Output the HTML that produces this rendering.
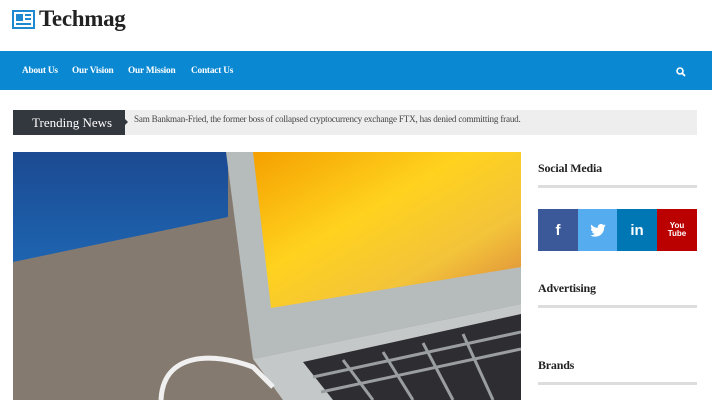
<!DOCTYPE html>
<html><head><style>
*{margin:0;padding:0;box-sizing:border-box}
body{width:712px;height:400px;overflow:hidden;background:#fff;font-family:"Liberation Serif","DejaVu Serif",serif;position:relative}
.a{position:absolute}
.nav a{position:absolute;top:66px;color:#fff;font-weight:bold;font-size:9.3px;letter-spacing:-0.2px}
.h{position:absolute;left:538px;font-weight:bold;font-size:12px;color:#222;letter-spacing:-0.2px}
.ln{position:absolute;left:538px;width:159px;height:3px;background:#ddd}
.s{position:absolute;top:209px;width:40px;height:42px;color:#fff;font-family:"Liberation Sans",sans-serif;font-weight:bold;font-size:15px;display:flex;align-items:center;justify-content:center}
</style></head><body>
<svg class="a" style="left:12px;top:10px" width="23" height="19" viewBox="0 0 23 19"><rect x="1" y="1" width="21" height="17" fill="none" stroke="#1e88d0" stroke-width="2"/><rect x="4" y="4" width="7" height="7" fill="#1e88d0"/><rect x="13" y="4" width="6" height="2" fill="#1e88d0"/><rect x="13" y="8" width="6" height="2" fill="#1e88d0"/><rect x="4" y="13" width="15" height="2" fill="#1e88d0"/></svg>
<div class="a" style="left:39px;top:6px;font-size:23px;font-weight:bold;color:#222;letter-spacing:-0.3px">Techmag</div>
<div class="a" style="left:0;top:51px;width:712px;height:39px;background:#0a88d2"></div>
<div class="nav"><a style="left:22px">About Us</a><a style="left:72px">Our Vision</a><a style="left:128px">Our Mission</a><a style="left:191px">Contact Us</a></div>
<svg class="a" style="left:676px;top:67px" width="10" height="10" viewBox="0 0 10 10"><circle cx="4" cy="4" r="3" fill="none" stroke="#fff" stroke-width="1.6"/><path d="M6.3 6.3L9 9" stroke="#fff" stroke-width="1.8"/></svg>
<div class="a" style="left:13px;top:110px;width:684px;height:25px;background:#eee"></div>
<div class="a" style="left:13px;top:110px;width:112px;height:25px;background:#33373e;color:#fff;font-size:13px;line-height:25px;padding-left:19px">Trending News</div>
<div class="a" style="left:124px;top:118px;border-left:4px solid #33373e;border-top:4px solid transparent;border-bottom:4px solid transparent"></div>
<div class="a" style="left:134px;top:114px;font-size:9.1px;color:#444;letter-spacing:-0.2px">Sam Bankman-Fried, the former boss of collapsed cryptocurrency exchange FTX, has denied committing fraud.</div>
<svg class="a" style="left:13px;top:152px" width="508" height="248" viewBox="0 0 508 248">
<defs><linearGradient id="sc" x1="0" y1="0" x2="1" y2="1"><stop offset="0" stop-color="#f5a000"/><stop offset=".4" stop-color="#ffd21e"/><stop offset=".7" stop-color="#f3c33a"/><stop offset="1" stop-color="#d9803a"/></linearGradient>
<linearGradient id="bl" x1="0" y1="0" x2="0" y2="1"><stop offset="0" stop-color="#1b4a92"/><stop offset="1" stop-color="#1e64b0"/></linearGradient></defs>
<rect width="508" height="248" fill="#857a70"/>
<polygon points="0,0 215,0 215,65 0,110" fill="url(#bl)"/>
<polygon points="213,0 508,0 508,152 240,207" fill="#b6bcbc"/>
<polygon points="240,0 508,0 508,115 258,156" fill="url(#sc)"/>
<polygon points="240,207 508,152 508,248 270,248" fill="#c4c8c8"/>
<polygon points="290,210 508,162 508,248 320,248" fill="#2e2e32"/>
<g stroke="#9a9ea0" stroke-width="3"><path d="M300,225 L508,180"/><path d="M308,240 L508,197"/><path d="M330,208 L360,248"/><path d="M370,200 L400,248"/><path d="M410,191 L440,248"/><path d="M450,182 L480,248"/></g>
<path d="M148,248 C150,200 200,200 240,215 L260,235" fill="none" stroke="#f0f0f0" stroke-width="5"/>
</svg>
<div class="h" style="top:161px">Social Media</div>
<div class="ln" style="top:185px"></div>
<div class="s" style="left:538px;background:#3b5998">f</div>
<div class="s" style="left:578px;background:#55acee"><svg width="16" height="13" viewBox="0 0 24 20"><path d="M24 2.4a10 10 0 0 1-2.8.8A5 5 0 0 0 23.3.4a10 10 0 0 1-3.1 1.2A4.9 4.9 0 0 0 11.8 6 14 14 0 0 1 1.7.9a4.9 4.9 0 0 0 1.5 6.6A4.9 4.9 0 0 1 1 6.9a4.9 4.9 0 0 0 3.9 4.8 5 5 0 0 1-2.2.1 4.9 4.9 0 0 0 4.6 3.4A9.9 9.9 0 0 1 0 17.3 14 14 0 0 0 7.5 19.5c9 0 14-7.5 14-14v-.6A10 10 0 0 0 24 2.4z" fill="#fff"/></svg></div>
<div class="s" style="left:617px;background:#0077b5">in</div>
<div class="s" style="left:657px;background:#bb0000;font-size:8px;line-height:8px;text-align:center">You<br>Tube</div>
<div class="h" style="top:281px">Advertising</div>
<div class="ln" style="top:305px"></div>
<div class="h" style="top:358px">Brands</div>
<div class="ln" style="top:382px"></div>
</body></html>
